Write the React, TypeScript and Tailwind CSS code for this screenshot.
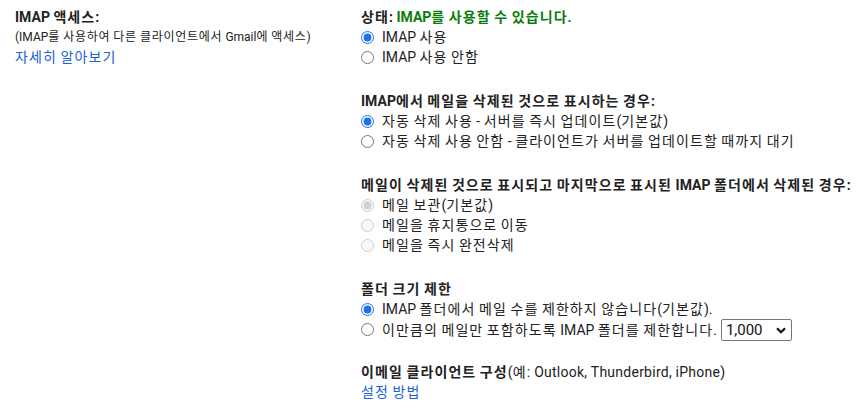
import React from "react";

const font = { fontFamily: 'Roboto, "Noto Sans CJK KR", "Noto Sans", sans-serif' };

function K({ t, small }: { t: string; small?: boolean }) {
  const parts = t.split(/([\uAC00-\uD7A3]+)/);
  return (
    <>
      {parts.map((p, i) =>
        /[\uAC00-\uD7A3]/.test(p) ? (
          <span key={i} className={small ? "tracking-[0.75px]" : "tracking-[1.1px]"}>
            {p}
          </span>
        ) : (
          <React.Fragment key={i}>{p}</React.Fragment>
        )
      )}
    </>
  );
}

function Radio({ checked, disabled, label }: { checked?: boolean; disabled?: boolean; label: string }) {
  return (
    <label className="flex items-center h-[20px]">
      <input
        type="radio"
        defaultChecked={checked}
        disabled={disabled}
        className="m-0 mr-[8px] w-[13px] h-[13px] shrink-0 accent-[#1a73e8]"
      />
      <span className="whitespace-nowrap">
        <K t={label} />
      </span>
    </label>
  );
}

export default function App() {
  return (
    <div className="w-[865px] h-[409px] bg-white text-[#222] text-[14px] leading-[20px] overflow-hidden" style={font}>
      <div className="flex pt-[7px]">
        <div className="w-[361px] pl-[15px] shrink-0">
          <div className="font-bold">
            <K t="IMAP 액세스:" />
          </div>
          <div className="text-[12px] leading-[20px] whitespace-nowrap">
            <K small t="(IMAP를 사용하여 다른 클라이언트에서 Gmail에 액세스)" />
          </div>
          <div className="text-[#1a62d6]">
            <K t="자세히 알아보기" />
          </div>
        </div>
        <div className="flex flex-col">
          <div>
            <div className="font-bold">
              <K t="상태: " />
              <span className="text-[#0b7d0b]">
                <K t="IMAP를 사용할 수 있습니다." />
              </span>
            </div>
            <Radio checked label="IMAP 사용" />
            <Radio label="IMAP 사용 안함" />
          </div>
          <div className="mt-[24px]">
            <div className="font-bold">
              <K t="IMAP에서 메일을 삭제된 것으로 표시하는 경우:" />
            </div>
            <Radio checked label="자동 삭제 사용 - 서버를 즉시 업데이트(기본값)" />
            <Radio label="자동 삭제 사용 안함 - 클라이언트가 서버를 업데이트할 때까지 대기" />
          </div>
          <div className="mt-[24px]">
            <div className="font-bold whitespace-nowrap">
              <K t="메일이 삭제된 것으로 표시되고 마지막으로 표시된 IMAP 폴더에서 삭제된 경우:" />
            </div>
            <Radio checked disabled label="메일 보관(기본값)" />
            <Radio disabled label="메일을 휴지통으로 이동" />
            <Radio disabled label="메일을 즉시 완전삭제" />
          </div>
          <div className="mt-[24px]">
            <div className="font-bold">
              <K t="폴더 크기 제한" />
            </div>
            <Radio checked label="IMAP 폴더에서 메일 수를 제한하지 않습니다(기본값)." />
            <label className="flex items-center h-[21px]">
              <input type="radio" className="m-0 mr-[8px] w-[13px] h-[13px] shrink-0 accent-[#1a73e8]" />
              <span className="whitespace-nowrap">
                <K t="이만큼의 메일만 포함하도록 IMAP 폴더를 제한합니다." />
              </span>
              <span className="relative ml-[4px] flex">
                <select
                  defaultValue="1000"
                  className="appearance-none w-[71px] h-[22px] border border-[#767676] rounded-[2px] pl-[4px] text-[15px] leading-[20px] bg-white text-[#111]"
                >
                  <option value="1000">1,000</option>
                  <option value="2000">2,000</option>
                  <option value="5000">5,000</option>
                  <option value="10000">10,000</option>
                </select>
                <svg className="absolute right-[6px] top-[8px] pointer-events-none" width="10" height="7" viewBox="0 0 10 7">
                  <path d="M1 1.2 L5 5.2 L9 1.2" fill="none" stroke="#111" strokeWidth="2.2" />
                </svg>
              </span>
            </label>
          </div>
          <div className="mt-[22px]">
            <div className="whitespace-nowrap">
              <span className="font-bold">
                <K t="이메일 클라이언트 구성" />
              </span>
              <span className="tracking-[0.25px]">
                <K t="(예: Outlook, Thunderbird, iPhone)" />
              </span>
            </div>
            <div className="text-[#1a62d6]">
              <K t="설정 방법" />
            </div>
          </div>
        </div>
      </div>
    </div>
  );
}
